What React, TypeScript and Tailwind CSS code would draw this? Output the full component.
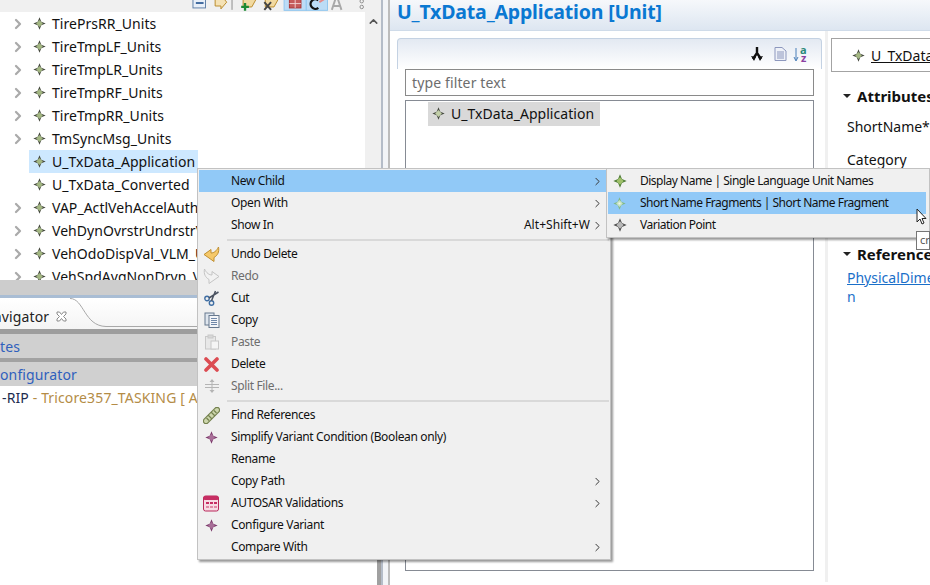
import React from "react";
import { ChevronRight, ChevronUp } from "lucide-react";

function Star({ c = "#a3b782", o = "#45493f", size = 13, glow = false }: { c?: string; o?: string; size?: number; glow?: boolean }) {
  return (
    <svg width={size} height={size} viewBox="0 0 13 13" className="shrink-0">
      <path d="M6.5 0.3 L8.3 4.7 L12.7 6.5 L8.3 8.3 L6.5 12.7 L4.7 8.3 L0.3 6.5 L4.7 4.7 Z" fill={o} />
      <rect x="4.1" y="4.1" width="4.8" height="4.8" transform="rotate(45 6.5 6.5)" fill={c} />
      {glow && <circle cx="6.5" cy="6.5" r="1.1" fill="#eef8ea" />}
    </svg>
  );
}

const treeRows: [string, boolean, boolean][] = [
  ["TirePrsRR_Units", true, false],
  ["TireTmpLF_Units", true, false],
  ["TireTmpLR_Units", true, false],
  ["TireTmpRF_Units", true, false],
  ["TireTmpRR_Units", true, false],
  ["TmSyncMsg_Units", true, false],
  ["U_TxData_Application", false, true],
  ["U_TxData_Converted", false, false],
  ["VAP_ActlVehAccelAuthn_Units", true, false],
  ["VehDynOvrstrUndrstrVal_Units", true, false],
  ["VehOdoDispVal_VLM_Units", true, false],
  ["VehSpdAvgNonDrvn_VLM_Units", true, false],
];

function TreeRow({ name, arrow, sel }: { name: string; arrow: boolean; sel: boolean }) {
  return (
    <div className="flex h-[23px] shrink-0 items-center">
      <div className="flex w-[29px] shrink-0 justify-end pr-[3px]">
        {arrow && <ChevronRight size={16} strokeWidth={3.4} className="text-[#aaaaaa]" />}
      </div>
      <div className={`flex h-[23px] items-center pl-[4px] ${sel ? "w-[169px] bg-[#cde8ff]" : ""}`}>
        <Star />
        <span className="ml-[6px] whitespace-nowrap text-[14px] tracking-[0.04px]">{name}</span>
      </div>
    </div>
  );
}

function ToolbarIcons() {
  return (
    <div className="flex h-[12px] items-end overflow-hidden bg-[#f0f0f0] pl-[192px]">
      <svg width="196" height="12" viewBox="0 0 196 12">
        <rect x="1" y="-4" width="13" height="12" fill="#e8eff8" stroke="#5f7fa8" />
        <rect x="4" y="2" width="8" height="1.8" fill="#2c5a94" />
        <path d="M24 -2 H30 V-5 L36 2 L30 9 V6 H24 Z" fill="#f5e2b5" stroke="#b98a2a" />
        <path d="M41.5 -2 V10" stroke="#8a8a8a" />
        <path d="M53 -2 H67 L62 7 H53 Z" fill="#f1d9a0" stroke="#b98a2a" />
        <path d="M55 3 V11 M51 7 H59" stroke="#1d8a34" strokeWidth="2.4" />
        <path d="M76 -2 H90 L85 7 H76 Z" fill="#f1d9a0" stroke="#b98a2a" />
        <path d="M75 2 L82 10 M82 2 L75 10" stroke="#444" strokeWidth="2" />
        <rect x="95.5" y="-3" width="23" height="13.5" fill="#bcdcf6" stroke="#90c6ef" />
        <rect x="118.5" y="-3" width="22" height="13.5" fill="#bcdcf6" stroke="#90c6ef" />
        <rect x="101" y="-1" width="12" height="9" fill="#c55a5a" stroke="#a33" />
        <path d="M107 -1 V8 M101 3.5 H113" stroke="#f2d0d0" />
        <path d="M131 0 A5 5 0 1 0 131 8" fill="none" stroke="#111" strokeWidth="2.4" />
        <path d="M132 2 L137 -1" stroke="#e58a8a" strokeWidth="2" />
        <path d="M145 10 L149 -2 H151 L155 10 M147 6 H153" fill="none" stroke="#a8a8a8" strokeWidth="2" />
        <circle cx="176" cy="1" r="1.8" fill="none" stroke="#8c8c8c" />
        <circle cx="176" cy="7" r="1.8" fill="none" stroke="#8c8c8c" />
      </svg>
    </div>
  );
}

function LeftPane() {
  return (
    <div className="flex w-[381px] shrink-0 flex-col">
      <ToolbarIcons />
      <div className="flex h-[268px] shrink-0 overflow-hidden">
        <div className="flex min-w-0 flex-1 flex-col overflow-hidden bg-white">
          {treeRows.map((r) => (
            <TreeRow key={r[0]} name={r[0]} arrow={r[1]} sel={r[2]} />
          ))}
        </div>
        <div className="flex w-[16px] shrink-0 justify-center bg-[#f0f0f0] pt-[3px]">
          <ChevronUp size={13} strokeWidth={2.8} className="text-[#555]" />
        </div>
      </div>
      <div className="flex min-h-0 flex-1 flex-col border-r-[4px] border-[#a0a0a0]">
        <div className="h-[15px] shrink-0 bg-[#cdcdcd]" />
        <div className="h-[3px] shrink-0 bg-[#a9bdd4]" />
        <div className="relative flex h-[31px] shrink-0 items-center overflow-hidden bg-linear-to-b from-white to-[#f4f4f4] pt-[6px]">
          <span className="ml-[-17px] text-[14px] tracking-[0.13px] text-[#222]">Navigator</span>
          <svg width="11" height="11" viewBox="0 0 11 11" className="ml-[7px]">
            <path d="M1 1 H3.5 L5.5 3.5 L7.5 1 H10 V3 L7.5 5.5 L10 8 V10 H7.5 L5.5 7.5 L3.5 10 H1 V8 L3.5 5.5 L1 3 Z" fill="#fff" stroke="#8a8a8a" />
          </svg>
          <svg width="130" height="31" viewBox="0 0 130 31" className="absolute left-[70px] top-0">
            <path d="M0 0.5 C14 0.5 14 28 36 28.5 H130" fill="none" stroke="#a8a8a8" />
          </svg>
        </div>
        <div className="h-[5px] shrink-0 bg-[#9d9d9d]" />
        <div className="flex h-[24px] shrink-0 items-center overflow-hidden bg-[#d0d0d0] text-[14px] tracking-[0.13px] text-[#2f5fbd]">
          <span>tes</span>
        </div>
        <div className="h-[4px] shrink-0 bg-[#a2a2a2]" />
        <div className="flex h-[24px] shrink-0 items-center overflow-hidden bg-[#d0d0d0] text-[14px] tracking-[0.13px] text-[#2f5fbd]">
          <span>onfigurator</span>
        </div>
        <div className="flex h-[22px] shrink-0 items-center overflow-hidden whitespace-nowrap bg-white pl-[2px] text-[14px] tracking-[0.13px]">
          <span className="text-[#1d2b4f]">-RIP</span>
          <span className="text-[#b48c46]">&nbsp;- Tricore357_TASKING [ A</span>
        </div>
        <div className="flex-1 bg-white" />
      </div>
    </div>
  );
}

function Splitter() {
  return (
    <div className="flex w-[9px] shrink-0">
      <div className="w-[2px] bg-[#b4bcc8]" />
      <div className="w-[5px] bg-[#f2f4f7]" />
      <div className="w-[2px] bg-[#bcbcbc]" />
    </div>
  );
}

function RightPane() {
  return (
    <div className="flex min-w-0 flex-1 flex-col bg-white">
      <div className="flex h-[31px] shrink-0 items-center border-b border-[#cfdbe9] bg-linear-to-b from-[#f6f8fb] to-[#dde6f1] pb-[6px] pl-[7px]">
        <span className="text-[19.5px] font-bold leading-none tracking-[-0.17px] text-[#0a78d2]">U_TxData_Application [Unit]</span>
      </div>
      <div className="flex min-h-0 flex-1 pl-[7px]">
        <div className="mt-[7px] flex w-[425px] shrink-0 flex-col">
          <div className="flex h-[31px] shrink-0 items-center justify-end rounded-t-[4px] border-x border-t border-[#c4d2e3] bg-linear-to-b from-[#e3e9f2] to-white pr-[8px]">
            <svg width="62" height="16" viewBox="0 0 62 16">
              <path d="M6 1 V7 M6 7 L2 13 M6 7 L10 13" fill="none" stroke="#111" strokeWidth="2.4" />
              <path d="M0 10 L3 15 L5 11 Z M12 10 L9 15 L7 11 Z" fill="#111" />
              <path d="M24 1.5 H31 L35 5 V14.5 H24 Z" fill="#eef1f8" stroke="#8c97bd" />
              <path d="M26 6 H33 M26 8 H33 M26 10 H33 M26 12 H33" stroke="#8c97bd" />
              <path d="M45 2 V14 M43 11 L45 15 L47 11" fill="none" stroke="#4a7fb8" />
              <text x="49" y="7.5" fontSize="11" fontWeight="700" fill="#2a8a7a" fontFamily="Open Sans">a</text>
              <text x="50" y="16" fontSize="11" fontWeight="700" fill="#8a3fa0" fontFamily="Open Sans">z</text>
            </svg>
          </div>
          <div className="flex min-h-0 flex-1 flex-col pb-[14px] pl-[8px] pr-[8px]">
            <div className="flex h-[27px] shrink-0 items-center border border-[#8a8a8a] pl-[6px] text-[14px] tracking-[0.13px] text-[#6d6d6d]">type filter text</div>
            <div className="mt-[4px] min-h-0 flex-1 border border-[#868b94] pt-px pl-[22px]">
              <div className="flex h-[24px] w-[172px] items-center gap-[6px] bg-[#d9d9d9] pb-[1px] pl-[4px]">
                <Star c="#c2cfa8" />
                <span className="text-[14px] tracking-[0.04px] text-[#111]">U_TxData_Application</span>
              </div>
            </div>
          </div>
        </div>
        <div className="mb-[3px] ml-[3px] w-[3px] shrink-0 bg-[#f0f0f0]" />
        <div className="min-w-0 flex-1 overflow-hidden pl-[3px] pt-[7px] text-[14px]">
          <div className="flex h-[34px] items-center whitespace-nowrap border-y border-l border-[#a3a3a3] pl-[20px]">
            <Star />
            <span className="ml-[6px] underline">U_TxData_Application</span>
          </div>
          <div className="ml-[12px] mt-[15px] flex h-[18px] items-center gap-[6px] whitespace-nowrap text-[15px] font-bold">
            <span className="h-0 w-0 border-x-[4px] border-t-[4px] border-x-transparent border-t-[#222]" />
            Attributes
          </div>
          <div className="ml-[16px] mt-[11px] h-[20px] whitespace-nowrap">ShortName*</div>
          <div className="ml-[16px] mt-[13px] h-[20px] whitespace-nowrap">Category</div>
          <div className="ml-[12px] mt-[76px] flex h-[18px] items-center gap-[6px] whitespace-nowrap text-[15px] font-bold">
            <span className="h-0 w-0 border-x-[4px] border-t-[4px] border-x-transparent border-t-[#222]" />
            References
          </div>
          <div className="ml-[16px] mt-[4px] h-[19px] whitespace-nowrap text-[#1a6fc9] underline">PhysicalDimension</div>
          <div className="ml-[16px] h-[20px] text-[#1a6fc9]">n</div>
        </div>
      </div>
    </div>
  );
}

const Undo = () => (
  <svg width="17" height="17" viewBox="0 0 17 17">
    <path d="M15.5 1 C16.5 6 14.5 9.5 11 11.5 L11 15.5 L1 8.5 L8 3.5 L8 7 C11 7 13.5 5 15.5 1 Z" fill="#f5c869" stroke="#c08f30" />
  </svg>
);
const Redo = () => (
  <svg width="17" height="17" viewBox="0 0 17 17">
    <path d="M1.5 1 C0.5 6 2.5 9.5 6 11.5 L6 15.5 L16 8.5 L9 3.5 L9 7 C6 7 3.5 5 1.5 1 Z" fill="#f2f2f2" stroke="#c4c4c4" />
  </svg>
);
const Cut = () => (
  <svg width="16" height="16" viewBox="0 0 16 16">
    <circle cx="3" cy="8.5" r="2.2" fill="none" stroke="#3f6ea3" strokeWidth="1.4" />
    <circle cx="7.5" cy="13" r="2.2" fill="none" stroke="#3f6ea3" strokeWidth="1.4" />
    <path d="M5 8 L14.5 2 M7.5 10.8 L11.5 1" stroke="#4a5260" strokeWidth="1.5" />
  </svg>
);
const Copy = () => (
  <svg width="16" height="16" viewBox="0 0 16 16">
    <rect x="1" y="1" width="9" height="12" fill="#dfe6ee" stroke="#66788e" />
    <rect x="5" y="3.5" width="10" height="12" fill="#f3f5f8" stroke="#66788e" />
    <path d="M7 6.5 H13 M7 8.5 H13 M7 10.5 H13 M7 12.5 H13" stroke="#6f87a8" />
  </svg>
);
const Paste = () => (
  <svg width="16" height="16" viewBox="0 0 16 16">
    <rect x="1.5" y="2.5" width="10" height="12.5" fill="#e8e8e8" stroke="#c8c8c8" />
    <rect x="4" y="1" width="5" height="3" fill="#d8d8d8" stroke="#c8c8c8" />
    <rect x="7" y="7" width="7.5" height="8" fill="#f5f5f5" stroke="#c8c8c8" />
  </svg>
);
const Del = () => (
  <svg width="15" height="15" viewBox="0 0 15 15">
    <path d="M2 2 L13 13 M13 2 L2 13" stroke="#dc4c52" strokeWidth="3.6" strokeLinecap="round" />
  </svg>
);
const Split = () => (
  <svg width="16" height="16" viewBox="0 0 16 16">
    <path d="M1 6.5 H15 M1 9.5 H15" stroke="#b4b4b4" />
    <path d="M8 1 L5.5 4 H10.5 Z M8 15 L5.5 12 H10.5 Z" fill="#b4b4b4" />
    <path d="M8 3 V13" stroke="#b4b4b4" />
  </svg>
);
const Chain = () => (
  <svg width="17" height="17" viewBox="0 0 17 17">
    <path d="M3 14 L14 3" stroke="#74804e" strokeWidth="6.4" strokeLinecap="round" />
    <path d="M3 14 L14 3" stroke="#cdd6ac" strokeWidth="4" strokeLinecap="round" />
    <path d="M5 8 L9 12 M8 5 L12 9 M3.5 11 L6 13.5 M11 3.5 L13.5 6" stroke="#74804e" strokeWidth="1.2" />
  </svg>
);
const Aut = () => (
  <svg width="17" height="17" viewBox="0 0 17 17">
    <rect x="0.5" y="1" width="15" height="15" rx="2" fill="#f7dbe3" stroke="#b9275a" />
    <rect x="0.5" y="1" width="15" height="4" rx="1.5" fill="#c72e63" />
    <path d="M3 7 H6 V9 H3 Z M7 7 H10 V9 H7 Z M11 7 H14 V9 H11 Z" fill="#c72e63" />
    <path d="M3 11 H6 V13 H3 Z M7 11 H10 V13 H7 Z M11 11 H14 V13 H11 Z" fill="#e08aa5" />
  </svg>
);
const Purple = () => <Star c="#a86f98" o="#7d3a6c" size={13} />;

type Item = { label?: string; icon?: React.ReactNode; sub?: boolean; dis?: boolean; hl?: boolean; sc?: string; sep?: boolean };

const mainItems: Item[] = [
  { label: "New Child", sub: true, hl: true },
  { label: "Open With", sub: true },
  { label: "Show In", sub: true, sc: "Alt+Shift+W" },
  { sep: true },
  { label: "Undo Delete", icon: <Undo /> },
  { label: "Redo", icon: <Redo />, dis: true },
  { label: "Cut", icon: <Cut /> },
  { label: "Copy", icon: <Copy /> },
  { label: "Paste", icon: <Paste />, dis: true },
  { label: "Delete", icon: <Del /> },
  { label: "Split File...", icon: <Split />, dis: true },
  { sep: true },
  { label: "Find References", icon: <Chain /> },
  { label: "Simplify Variant Condition (Boolean only)", icon: <Purple /> },
  { label: "Rename" },
  { label: "Copy Path", sub: true },
  { label: "AUTOSAR Validations", icon: <Aut />, sub: true },
  { label: "Configure Variant", icon: <Purple /> },
  { label: "Compare With", sub: true },
];

function MainMenu() {
  return (
    <div className="absolute left-[197px] top-[168px] w-[414px] border border-[#c2c2c2] bg-[#f0f0f0] p-px shadow-[2px_2px_2px_rgba(0,0,0,0.4)]">
      {mainItems.map((it, i) =>
        it.sep ? (
          <div key={i} className="flex h-[7px] items-center pl-[28px]">
            <div className="h-[2px] w-full bg-[#d9d9d9]" />
          </div>
        ) : (
          <div key={i} className={`flex h-[22px] items-center whitespace-nowrap text-[12px] ${it.hl ? "bg-[#91c9f7]" : ""} ${it.dis ? "text-[#6d6d6d]" : "text-[#111]"}`}>
            <div className="flex w-[32px] shrink-0 items-center justify-center pr-[7px]">{it.icon}</div>
            <span className="tracking-[-0.36px]">{it.label}</span>
            <span className="flex-1" />
            {it.sc && <span className="mr-[-5px] tracking-[0.05px]">{it.sc}</span>}
            <div className="flex w-[24px] shrink-0 justify-center">
              {it.sub && <ChevronRight size={13} strokeWidth={1.8} className="text-[#333]" />}
            </div>
          </div>
        )
      )}
    </div>
  );
}

function SubMenu() {
  const rows: [string, React.ReactNode, boolean][] = [
    ["Display Name | Single Language Unit Names", <Star key="a" c="#9fc06a" o="#4d7a35" size={14} />, false],
    ["Short Name Fragments | Short Name Fragment", <Star key="b" c="#c7e3c4" o="#7fb88a" size={13} glow />, true],
    ["Variation Point", <Star key="c" c="#b8b8b8" o="#4a4a4a" size={14} />, false],
  ];
  return (
    <div className="absolute left-[606px] top-[168px] w-[324px] border border-[#c2c2c2] bg-[#f0f0f0] py-px pl-px pr-[3px] shadow-[2px_2px_2px_rgba(0,0,0,0.4)]">
      {rows.map(([t, ic, hl]) => (
        <div key={t} className={`flex h-[22px] items-center whitespace-nowrap text-[12px] text-[#111] ${hl ? "bg-[#91c9f7]" : ""}`}>
          <div className="flex w-[23px] shrink-0 justify-center">{ic}</div>
          <span className="ml-[9px] tracking-[-0.5px]">{t}</span>
        </div>
      ))}
    </div>
  );
}

export default function App() {
  return (
    <div className="relative flex h-[585px] w-[930px] overflow-hidden bg-white font-['Open_Sans',sans-serif] text-[#111]">
      <LeftPane />
      <Splitter />
      <RightPane />
      <MainMenu />
      <SubMenu />
      <div className="absolute left-[916px] top-[231px] flex h-[19px] w-[14px] items-center border border-[#767676] bg-white pl-[3px] text-[11px] text-[#555]">cr</div>
      <svg width="12" height="18" viewBox="0 0 12 18" className="absolute left-[916px] top-[208px]">
        <path d="M1 1 V14 L4 11 L6 16 L8 15 L6 10.5 H10 Z" fill="#fff" stroke="#222" />
      </svg>
    </div>
  );
}
